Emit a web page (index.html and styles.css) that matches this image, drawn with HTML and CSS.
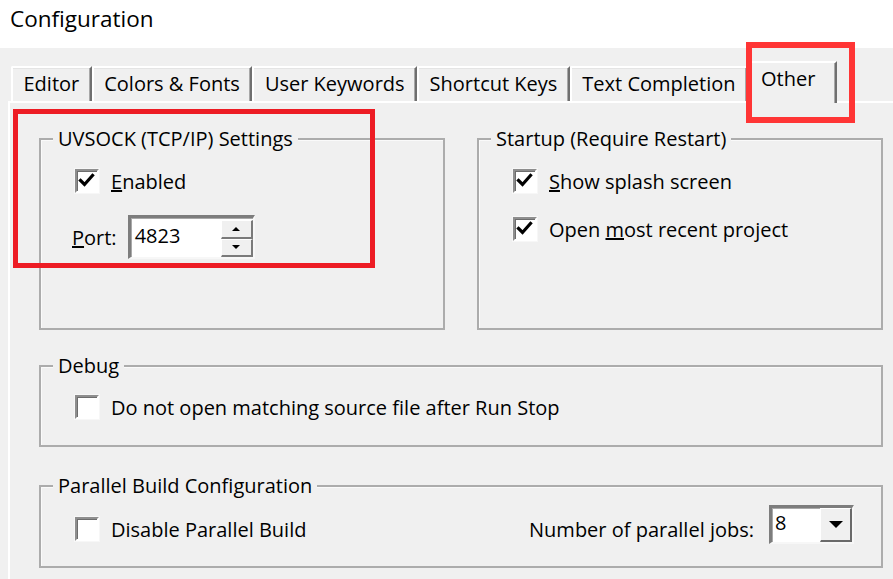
FILE: index.html
```html
<!DOCTYPE html>
<html>
<head>
<meta charset="utf-8">
<title>Configuration</title>
<link rel="stylesheet" href="styles.css">
</head>
<body>
  <div class="titlebar">Configuration</div>
  <div class="dialog">
    <div class="tabs">
      <div class="tab">Editor</div>
      <div class="tab">Colors &amp; Fonts</div>
      <div class="tab">User Keywords</div>
      <div class="tab">Shortcut Keys</div>
      <div class="tab">Text Completion</div>
      <div class="tab active">Other</div>
    </div>
    <div class="pane">
      <div class="row">
        <div class="group tall">
          <span class="legend">UVSOCK (TCP/IP) Settings</span>
          <label class="check first">
            <span class="box checked"><svg viewBox="0 0 20 20"><polyline points="3.5,9.5 7.5,13.5 15.5,4.5"/></svg></span>
            <span><u>E</u>nabled</span>
          </label>
          <div class="port">
            <span class="port-label"><u>P</u>ort:</span>
            <div class="spin">
              <span class="spin-value">4823</span>
              <span class="spin-buttons">
                <span class="spin-btn"><span class="tri-up"></span></span>
                <span class="spin-btn"><span class="tri-down small"></span></span>
              </span>
            </div>
          </div>
        </div>
        <div class="group tall">
          <span class="legend">Startup (Require Restart)</span>
          <label class="check first">
            <span class="box checked"><svg viewBox="0 0 20 20"><polyline points="3.5,9.5 7.5,13.5 15.5,4.5"/></svg></span>
            <span><u>S</u>how splash screen</span>
          </label>
          <label class="check second">
            <span class="box checked"><svg viewBox="0 0 20 20"><polyline points="3.5,9.5 7.5,13.5 15.5,4.5"/></svg></span>
            <span>Open <u>m</u>ost recent project</span>
          </label>
        </div>
      </div>
      <div class="group wide debug">
        <span class="legend">Debug</span>
        <label class="check debug-row">
          <span class="box"></span>
          <span>Do not open matching source file after Run Stop</span>
        </label>
      </div>
      <div class="group wide parallel">
        <span class="legend">Parallel Build Configuration</span>
        <div class="par-row">
          <label class="check inline">
            <span class="box"></span>
            <span>Disable Parallel Build</span>
          </label>
          <div class="jobs">
            <span>Number of parallel jobs:</span>
            <div class="combo">
              <span class="combo-value">8</span>
              <span class="combo-btn"><span class="tri-down"></span></span>
            </div>
          </div>
        </div>
      </div>
    </div>
  </div>
  <div class="mark mark-uvsock"></div>
  <div class="mark mark-other"></div>
</body>
</html>
```

FILE: styles.css
```css
html, body {
  margin: 0;
  padding: 0;
}
body {
  width: 893px;
  height: 579px;
  overflow: hidden;
  position: relative;
  background: #f0f0f0;
  color: #000;
  font-family: "Open Sans", "Noto Sans", sans-serif;
  font-size: 20px;
}
.titlebar {
  height: 48px;
  background: #fff;
  padding-left: 10px;
  font-size: 22.5px;
  line-height: 38px;
}
.dialog {
  background: #f0f0f0;
  height: 531px;
  overflow: hidden;
}
.tabs {
  display: flex;
  align-items: flex-end;
  height: 53px;
  padding-left: 11px;
  position: relative;
  z-index: 1;
}
.tab {
  box-sizing: border-box;
  height: 35px;
  padding: 0 10.5px;
  line-height: 31px;
  white-space: nowrap;
  background: #f0f0f0;
  border-top: 2px solid #fff;
  border-left: 2px solid #fff;
  border-right: 2px solid #6f6f6f;
  box-shadow: inset -1px 0 #a8a8a8, inset 0 1px #e4e4e4;
  border-top-left-radius: 2px;
}
.tab.active {
  height: 42px;
  margin: 0 -2px -2px -2px;
  padding: 0 20px 0 13px;
  line-height: 32px;
  box-shadow: inset -1px 0 #a8a8a8;
  position: relative;
}
.pane {
  margin-left: 8px;
  border-top: 2px solid #fff;
  border-left: 2px solid #fff;
  padding: 35px 0 0 29px;
  height: 441px;
}
.row {
  display: flex;
  gap: 32px;
}
.group {
  box-sizing: border-box;
  border: 2px solid #acacac;
  box-shadow: inset 1px 1px #fafafa;
}
.group.tall {
  width: 406px;
  height: 192px;
}
.group.wide {
  width: 844px;
}
.group.debug {
  margin-top: 35px;
  height: 82px;
}
.group.parallel {
  margin-top: 38px;
  height: 83px;
}
.legend {
  display: block;
  width: fit-content;
  margin: -14px 0 0 12px;
  padding: 0 5px;
  background: #f0f0f0;
  line-height: 26px;
  white-space: nowrap;
}
.check {
  display: flex;
  align-items: center;
  gap: 12px;
  height: 26px;
  margin-left: 34px;
  white-space: nowrap;
}
.check.first {
  margin-top: 16px;
}
.check.second {
  margin-top: 22px;
}
.check.debug-row {
  margin-top: 15px;
}
.check.inline {
  margin: 0;
}
.box {
  box-sizing: border-box;
  width: 24px;
  height: 24px;
  flex: none;
  background: #fff;
  border-style: solid;
  border-width: 2px;
  border-color: #8e8e8e #ffffff #ffffff #8e8e8e;
  box-shadow: inset 1px 1px #6d6d6d, 0 0 0 1px #f7f7f7;
  display: flex;
}
.box svg {
  width: 20px;
  height: 20px;
}
.box polyline {
  fill: none;
  stroke: #000;
  stroke-width: 3.2;
  stroke-linecap: square;
}
.port {
  display: flex;
  align-items: center;
  gap: 11px;
  margin: 21px 0 0 31px;
}
.spin {
  box-sizing: border-box;
  display: flex;
  width: 127px;
  height: 44px;
  background: #fff;
  border-style: solid;
  border-width: 3px 2px 2px 3px;
  border-color: #7d7d7d #f7f7f7 #f7f7f7 #7d7d7d;
  box-shadow: inset 1px 1px #a9a9a9;
}
.spin-value {
  flex: 1;
  padding-left: 4px;
  line-height: 36px;
}
.spin-buttons {
  display: flex;
  flex-direction: column;
  width: 32px;
  padding: 2px 0 0;
}
.spin-btn {
  flex: 1;
  display: flex;
  align-items: center;
  justify-content: center;
  background: #f0f0f0;
  border-style: solid;
  border-width: 1px 2px 2px 1px;
  border-color: #fff #7a7a7a #7a7a7a #fff;
}
.tri-up {
  width: 0;
  height: 0;
  border-left: 4px solid transparent;
  border-right: 4px solid transparent;
  border-bottom: 4px solid #000;
}
.tri-down {
  width: 0;
  height: 0;
  border-left: 7px solid transparent;
  border-right: 7px solid transparent;
  border-top: 7px solid #000;
}
.tri-down.small {
  border-left-width: 4px;
  border-right-width: 4px;
  border-top-width: 4px;
}
.par-row {
  display: flex;
  align-items: center;
  justify-content: space-between;
  height: 26px;
  margin: 17px 27px 0 34px;
}
.jobs {
  display: flex;
  align-items: center;
  gap: 15px;
  white-space: nowrap;
}
.combo {
  box-sizing: border-box;
  display: flex;
  width: 85px;
  height: 39px;
  margin-bottom: 10px;
  background: #fff;
  border-style: solid;
  border-width: 3px 2px 2px 3px;
  border-color: #7d7d7d #f7f7f7 #f7f7f7 #7d7d7d;
  box-shadow: inset 1px 1px #a9a9a9;
}
.combo-value {
  flex: 1;
  padding-left: 3px;
  line-height: 30px;
}
.combo-btn {
  box-sizing: border-box;
  width: 32px;
  display: flex;
  align-items: center;
  justify-content: center;
  background: #f0f0f0;
  border-style: solid;
  border-width: 1px 2px 2px 1px;
  border-color: #fff #6a6a6a #6a6a6a #fff;
}
.mark {
  position: absolute;
  box-sizing: border-box;
  z-index: 5;
}
.mark-uvsock {
  left: 13px;
  top: 109px;
  width: 362px;
  height: 159px;
  border: 5px solid #ed1c24;
}
.mark-other {
  left: 746px;
  top: 42px;
  width: 109px;
  height: 81px;
  border: 6px solid #ff3535;
}
```
